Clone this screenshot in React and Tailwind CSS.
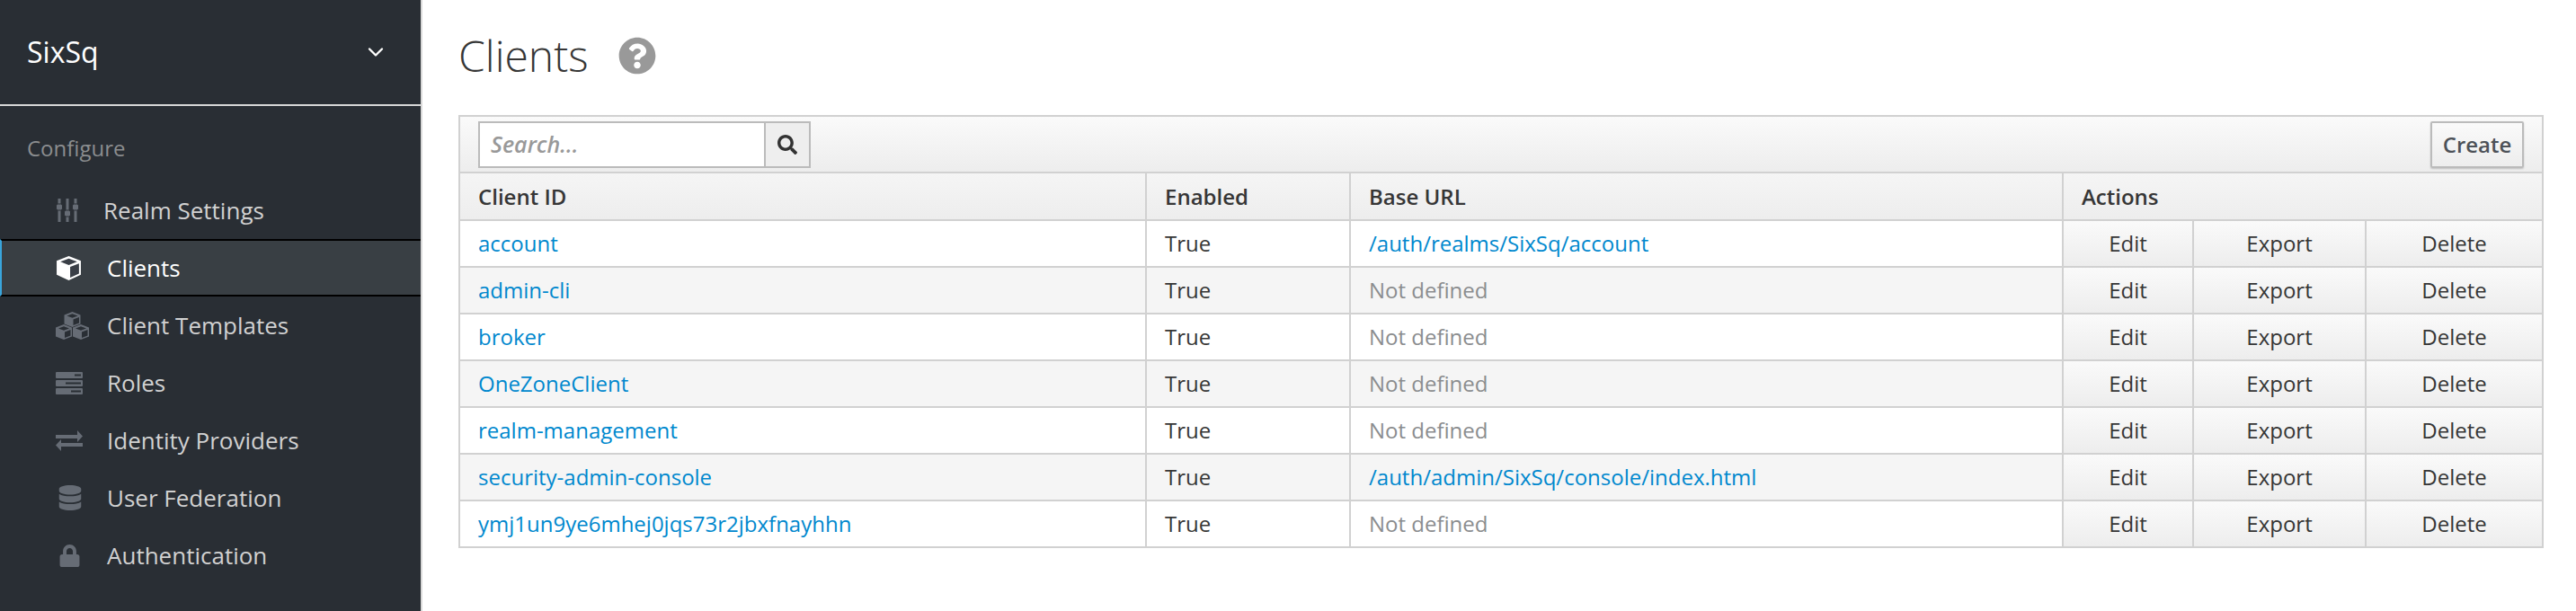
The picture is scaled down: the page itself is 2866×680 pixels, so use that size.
import { ChevronDown } from "lucide-react";
import { FaDatabase, FaLock, FaQuestionCircle, FaSearch } from "react-icons/fa";

function SlidersIcon() {
  return (
    <svg width="26" height="26" viewBox="0 0 26 26" fill="currentColor">
      <rect x="2.5" y="0" width="3" height="26" />
      <rect x="11.5" y="0" width="3" height="26" />
      <rect x="20.5" y="0" width="3" height="26" />
      <rect x="0.5" y="6" width="7" height="7" rx="2" stroke="#292e34" strokeWidth="1" />
      <rect x="9.5" y="13" width="7" height="7" rx="2" stroke="#292e34" strokeWidth="1" />
      <rect x="18.5" y="6" width="7" height="7" rx="2" stroke="#292e34" strokeWidth="1" />
    </svg>
  );
}

function CubeIcon() {
  return (
    <svg width="29" height="29" viewBox="0 0 28 28">
      <path d="M14 1 L27 6 V21 L14 27 L1 21 V6 Z" fill="#fff" />
      <path d="M14 3.5 L23 7 L14 10.5 L5 7 Z" fill="#3a3f47" />
      <path d="M15.5 12.5 L25 9 V19.8 L15.5 24.2 Z" fill="#3a3f47" />
    </svg>
  );
}

function CubesIcon() {
  const cube = (x, y) => (
    <g transform={`translate(${x} ${y})`}>
      <path d="M9 0 L18 3.5 V13.5 L9 17 L0 13.5 V3.5 Z" fill="#666c75" />
      <path d="M9 2.2 L15 4.5 L9 6.8 L3 4.5 Z" fill="#292e34" />
      <path d="M10 8.5 L16.5 6 V12.5 L10 15 Z" fill="#292e34" />
    </g>
  );
  return (
    <svg width="37" height="31" viewBox="0 0 37 31">
      {cube(9.5, 0)}
      {cube(0, 14)}
      {cube(19, 14)}
    </svg>
  );
}

function ServerIcon() {
  const bar = (y, x, w) => (
    <g>
      <rect x="0" y={y} width="30" height="7" rx="1" fill="#666c75" />
      <rect x={x} y={y + 2.5} width={w} height="2" fill="#292e34" />
    </g>
  );
  return (
    <svg width="30" height="25" viewBox="0 0 30 25">
      {bar(0, 21, 7)}
      {bar(9, 11, 17)}
      {bar(18, 17, 11)}
    </svg>
  );
}

function ExchangeIcon() {
  return (
    <svg width="30" height="23" viewBox="0 0 30 23" fill="currentColor">
      <path d="M0 5 H24 V0 L30 6.5 L24 13 V9 H0 Z" />
      <path d="M30 14 H6 V10 L0 16.5 L6 23 V18 H30 Z" />
    </svg>
  );
}

const navItems = [
  { label: "Realm Settings", icon: <SlidersIcon />, box: "w-[53px]" },
  { label: "Clients", icon: <CubeIcon />, active: true },
  { label: "Client Templates", icon: <CubesIcon /> },
  { label: "Roles", icon: <ServerIcon /> },
  { label: "Identity Providers", icon: <ExchangeIcon /> },
  { label: "User Federation", icon: <FaDatabase size={28} className="ml-[2px]" /> },
  { label: "Authentication", icon: <FaLock size={25} className="ml-[3px]" /> },
];

const clients = [
  { id: "account", url: "/auth/realms/SixSq/account" },
  { id: "admin-cli" },
  { id: "broker" },
  { id: "OneZoneClient" },
  { id: "realm-management" },
  { id: "security-admin-console", url: "/auth/admin/SixSq/console/index.html" },
  { id: "ymj1un9ye6mhej0jqs73r2jbxfnayhhn" },
];

function Sidebar() {
  return (
    <aside className="w-[470px] shrink-0 h-[680px] bg-[#292e34] border-r-2 border-[#d8d8d8]">
      <div className="h-[118px] flex items-center justify-between pl-[30px] pr-[36px] border-b-2 border-[#d8d8d8] text-white text-[32px] font-normal">
        <span>SixSq</span>
        <ChevronDown size={28} strokeWidth={2} />
      </div>
      <div className="h-[84px] pl-[30px] pt-[29px] text-[24px] leading-[36px] text-[#8b8d8f]">Configure</div>
      <nav>
        {navItems.map((item) => (
          <div
            key={item.label}
            className={
              item.active
                ? "h-[64px] flex items-center pl-[60px] bg-[#393f44] border-y-2 border-black border-l-2 border-l-[#39a5dc] text-white font-medium text-[26px]"
                : "h-[64px] flex items-center pl-[62px] text-[#d1d1d1] text-[26px]"
            }
          >
            <span className={`${item.box || "w-[57px]"} shrink-0 flex items-center text-[#666c75] ${item.active ? "text-white" : ""}`}>
              {item.icon}
            </span>
            <span>{item.label}</span>
          </div>
        ))}
      </nav>
    </aside>
  );
}

function Toolbar() {
  return (
    <div className="h-[65px] flex items-center justify-between pl-[20px] pr-[20px] border-2 border-[#d1d1d1] bg-gradient-to-b from-[#fafafa] to-[#ededed]">
      <div className="flex h-[52px]">
        <div className="w-[320px] flex items-center pl-[12px] bg-white border-2 border-[#bbb] text-[25px] italic font-semibold text-[#999]">
          Search...
        </div>
        <button className="w-[50px] flex items-center justify-center bg-[#eee] border-2 border-l-0 border-[#bbb] text-[#333]">
          <FaSearch size={22} />
        </button>
      </div>
      <button className="h-[52px] w-[104px] border-2 border-[#bbb] rounded-[2px] bg-gradient-to-b from-[#fafafa] to-[#ededed] text-[24px] font-semibold text-[#4d5258] shadow-[0_1px_2px_rgba(0,0,0,0.2)]">
        Create
      </button>
    </div>
  );
}

function ActionCell({ children }) {
  return (
    <td className="border-2 border-[#d1d1d1] text-center bg-gradient-to-b from-[#fafafa] to-[#ededed] text-[#363636]">
      {children}
    </td>
  );
}

function ClientsTable() {
  return (
    <table className="w-[2318px] table-fixed border-collapse text-[24px] text-[#363636]">
      <colgroup>
        <col className="w-[764px]" />
        <col className="w-[227px]" />
        <col className="w-[793px]" />
        <col className="w-[145px]" />
        <col className="w-[192px]" />
        <col className="w-[197px]" />
      </colgroup>
      <thead>
        <tr className="h-[52px] bg-gradient-to-b from-[#f5f5f5] to-[#ededed] font-semibold">
          <th className="border-2 border-t-0 border-[#d1d1d1] px-[20px] text-left font-semibold">Client ID</th>
          <th className="border-2 border-t-0 border-[#d1d1d1] px-[20px] text-left font-semibold">Enabled</th>
          <th className="border-2 border-t-0 border-[#d1d1d1] px-[20px] text-left font-semibold">Base URL</th>
          <th colSpan={3} className="border-2 border-t-0 border-[#d1d1d1] px-[20px] text-left font-semibold">Actions</th>
        </tr>
      </thead>
      <tbody>
        {clients.map((c, i) => (
          <tr key={c.id} className={i % 2 === 0 ? "h-[52px] bg-white" : "h-[52px] bg-[#f5f5f5]"}>
            <td className="border-2 border-[#d1d1d1] px-[20px] text-[#0088ce]">{c.id}</td>
            <td className="border-2 border-[#d1d1d1] px-[20px]">True</td>
            <td className={`border-2 border-[#d1d1d1] px-[20px] ${c.url ? "text-[#0088ce]" : "text-[#8b8d8f]"}`}>
              {c.url || "Not defined"}
            </td>
            <ActionCell>Edit</ActionCell>
            <ActionCell>Export</ActionCell>
            <ActionCell>Delete</ActionCell>
          </tr>
        ))}
      </tbody>
    </table>
  );
}

export default function App() {
  return (
    <div className="flex w-[2866px] h-[680px] bg-white overflow-hidden font-['Open_Sans',sans-serif]">
      <Sidebar />
      <main className="flex-1 pl-[40px] pr-[38px]">
        <div className="h-[128px] flex items-start pt-[28px]">
          <h1 className="text-[48px] leading-[68px] font-light text-[#363636]">Clients</h1>
          <FaQuestionCircle size={42} className="ml-[33px] mt-[13px] text-[#999]" />
        </div>
        <Toolbar />
        <ClientsTable />
      </main>
    </div>
  );
}
